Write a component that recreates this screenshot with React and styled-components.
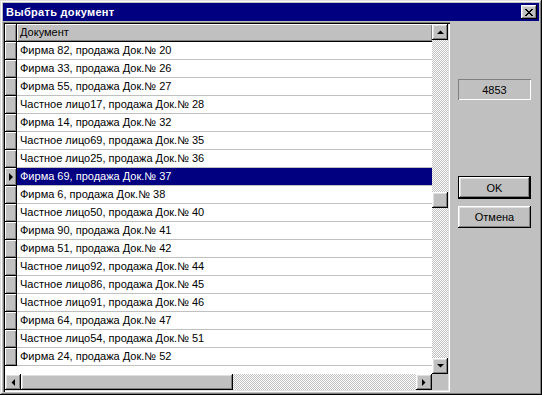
import styled, { createGlobalStyle, css } from 'styled-components';

const GlobalStyle = createGlobalStyle`
  html, body {
    margin: 0;
    padding: 0;
    background: #c0c0c0;
  }
  body {
    font-family: "Liberation Sans", Arial, sans-serif;
    font-size: 11px;
  }
`;

const raised = css`
  box-shadow: inset -1px -1px #000, inset 1px 1px #fff, inset -2px -2px #808080,
    inset 2px 2px #dfdfdf;
`;

const sunken = css`
  box-shadow: inset 1px 1px #808080, inset 2px 2px #000, inset -1px -1px #fff,
    inset -2px -2px #dfdfdf;
`;

const Window = styled.div`
  width: 542px;
  height: 395px;
  box-sizing: border-box;
  padding: 3px;
  display: flex;
  flex-direction: column;
  gap: 1px;
  background: #c0c0c0;
  box-shadow: inset -1px -1px #000, inset 1px 1px #dfdfdf, inset -2px -2px #808080,
    inset 2px 2px #fff;
`;

const TitleBar = styled.div`
  height: 18px;
  flex: none;
  display: flex;
  align-items: center;
  justify-content: space-between;
  padding: 0 2px 0 3px;
  background: #000080;
  color: #fff;
  font-weight: bold;
  font-size: 11px;
  letter-spacing: 0.3px;
`;

const CloseButton = styled.div`
  width: 16px;
  height: 14px;
  display: flex;
  align-items: center;
  justify-content: center;
  background: #c0c0c0;
  ${raised};
`;

const Content = styled.div`
  flex: 1;
  display: flex;
  min-height: 0;
`;

const GridFrame = styled.div`
  width: 447px;
  box-sizing: border-box;
  padding: 2px;
  display: grid;
  grid-template-columns: 1fr 16px;
  grid-template-rows: 1fr 16px;
  background: #fff;
  ${sunken};
`;

const Viewport = styled.div`
  overflow: hidden;
  background: #fff;
`;

const Row = styled.div`
  display: flex;
  height: 18px;
`;

const Indicator = styled.div`
  width: 11px;
  height: 17px;
  flex: none;
  display: flex;
  align-items: center;
  justify-content: center;
  background: #c0c0c0;
  border-right: 1px solid #000;
  border-bottom: 1px solid #000;
  box-shadow: inset 1px 1px #fff, inset -1px -1px #808080;
`;

const Cell = styled.div`
  flex: 1;
  height: 17px;
  line-height: 17px;
  padding-left: 3px;
  white-space: nowrap;
  background: ${(p) => (p.selected ? '#000080' : '#fff')};
  color: ${(p) => (p.selected ? '#fff' : '#000')};
  border-bottom: 1px solid ${(p) => (p.header ? '#000' : '#c0c0c0')};
`;

const HeaderCell = styled(Cell)`
  background: #c0c0c0;
  box-shadow: inset 1px 1px #fff, inset -1px -1px #808080;
`;

const track = css`
  background-color: #fff;
  background-image: repeating-conic-gradient(#c0c0c0 0 25%, #fff 0 50%);
  background-size: 2px 2px;
`;

const VScroll = styled.div`
  display: flex;
  flex-direction: column;
  ${track};
`;

const HScroll = styled.div`
  display: flex;
  ${track};
`;

const ScrollButton = styled.div`
  width: 16px;
  height: 16px;
  flex: none;
  box-sizing: border-box;
  display: flex;
  align-items: center;
  justify-content: center;
  background: #c0c0c0;
  ${raised};
`;

const Thumb = styled.div`
  flex: none;
  width: ${(p) => (p.horizontal ? 'auto' : '16px')};
  height: 16px;
  background: #c0c0c0;
  ${raised};
`;

const Spacer = styled.div`
  flex: 1;
`;

const Corner = styled.div`
  background: #c0c0c0;
`;

const SidePanel = styled.div`
  flex: 1;
  display: flex;
  flex-direction: column;
  padding: 57px 0 0 8px;
`;

const CountBox = styled.div`
  width: 73px;
  height: 21px;
  box-sizing: border-box;
  display: flex;
  align-items: center;
  justify-content: center;
  color: #000;
  box-shadow: inset 1px 1px #808080, inset -1px -1px #fff;
`;

const Button = styled.div`
  width: 73px;
  height: ${(p) => (p.primary ? 23 : 22)}px;
  box-sizing: border-box;
  display: flex;
  align-items: center;
  justify-content: center;
  color: #000;
  background: #c0c0c0;
  margin-top: ${(p) => p.top}px;
  ${(p) =>
    p.primary
      ? css`
          border: 1px solid #000;
          ${raised};
        `
      : raised};
`;

const Arrow = ({ dir }) => {
  const pts = {
    up: '0,4 7,4 3.5,0.5',
    down: '0,0 7,0 3.5,3.5',
    left: '4,0 4,7 0.5,3.5',
    right: '0,0 0,7 3.5,3.5',
  }[dir];
  const vertical = dir === 'up' || dir === 'down';
  return (
    <svg width={vertical ? 7 : 4} height={vertical ? 4 : 7} viewBox={vertical ? '0 0 7 4' : '0 0 4 7'}>
      <polygon points={pts} fill="#000" />
    </svg>
  );
};

const CloseGlyph = () => (
  <svg width="8" height="7" viewBox="0 0 8 7" shapeRendering="crispEdges">
    <path
      d="M0 0h2v1H0zM6 0h2v1H6zM1 1h2v1H1zM5 1h2v1H5zM2 2h4v1H2zM3 3h2v1H3zM2 4h4v1H2zM1 5h2v1H1zM5 5h2v1H5zM0 6h2v1H0zM6 6h2v1H6z"
      fill="#000"
    />
  </svg>
);

const docs = [
  'Фирма 82, продажа Док.№ 20',
  'Фирма 33, продажа Док.№ 26',
  'Фирма 55, продажа Док.№ 27',
  'Частное лицо17, продажа Док.№ 28',
  'Фирма 14, продажа Док.№ 32',
  'Частное лицо69, продажа Док.№ 35',
  'Частное лицо25, продажа Док.№ 36',
  'Фирма 69, продажа Док.№ 37',
  'Фирма 6, продажа Док.№ 38',
  'Частное лицо50, продажа Док.№ 40',
  'Фирма 90, продажа Док.№ 41',
  'Фирма 51, продажа Док.№ 42',
  'Частное лицо92, продажа Док.№ 44',
  'Частное лицо86, продажа Док.№ 45',
  'Частное лицо91, продажа Док.№ 46',
  'Фирма 64, продажа Док.№ 47',
  'Частное лицо54, продажа Док.№ 51',
  'Фирма 24, продажа Док.№ 52',
];

const selected = 7;

export default function App() {
  return (
    <>
      <GlobalStyle />
      <Window>
        <TitleBar>
          <span>Выбрать документ</span>
          <CloseButton>
            <CloseGlyph />
          </CloseButton>
        </TitleBar>
        <Content>
          <GridFrame>
            <Viewport>
              <Row>
                <Indicator />
                <HeaderCell header>Документ</HeaderCell>
              </Row>
              {docs.map((d, i) => (
                <Row key={d}>
                  <Indicator>
                    {i === selected && (
                      <svg width="4" height="8" viewBox="0 0 4 8">
                        <polygon points="0,0 0,8 4,4" fill="#000" />
                      </svg>
                    )}
                  </Indicator>
                  <Cell selected={i === selected}>{d}</Cell>
                </Row>
              ))}
            </Viewport>
            <VScroll>
              <ScrollButton>
                <Arrow dir="up" />
              </ScrollButton>
              <Spacer style={{ flex: 152 }} />
              <Thumb />
              <Spacer style={{ flex: 150 }} />
              <ScrollButton>
                <Arrow dir="down" />
              </ScrollButton>
            </VScroll>
            <HScroll>
              <ScrollButton>
                <Arrow dir="left" />
              </ScrollButton>
              <Thumb horizontal style={{ width: 212 }} />
              <Spacer />
              <ScrollButton>
                <Arrow dir="right" />
              </ScrollButton>
            </HScroll>
            <Corner />
          </GridFrame>
          <SidePanel>
            <CountBox>4853</CountBox>
            <Button primary top={76}>
              OK
            </Button>
            <Button top={7}>Отмена</Button>
          </SidePanel>
        </Content>
      </Window>
    </>
  );
}
